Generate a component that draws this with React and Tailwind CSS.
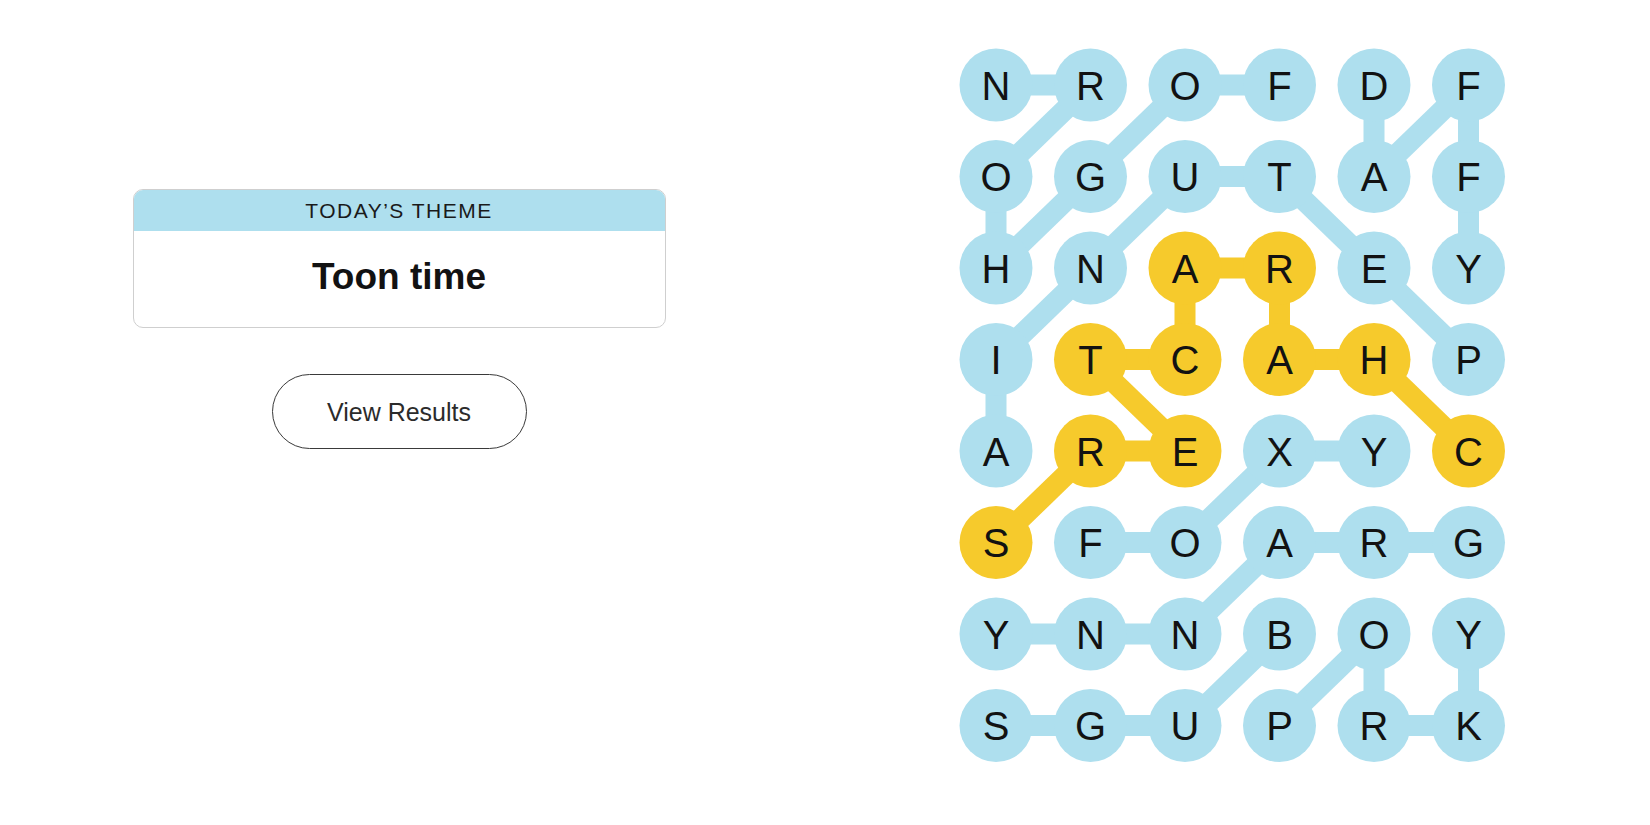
const rows = [
  "NROFDF",
  "OGUTAF",
  "HNAREY",
  "ITCAHP",
  "AREXYC",
  "SFOARG",
  "YNNBOY",
  "SGUPRK",
];

// paths of found words, as [row, col] cells
const blueWords = [
  [[0, 3], [0, 2], [1, 1], [2, 0], [1, 0], [0, 1], [0, 0]], // foghorn
  [[0, 4], [1, 4], [0, 5], [1, 5], [2, 5]], // daffy
  [[3, 5], [2, 4], [1, 3], [1, 2], [2, 1], [3, 0], [4, 0]], // petunia
  [[5, 1], [5, 2], [4, 3], [4, 4]], // foxy
  [[5, 5], [5, 4], [5, 3], [6, 2], [6, 1], [6, 0]], // granny
  [[6, 3], [7, 2], [7, 1], [7, 0]], // bugs
  [[7, 3], [6, 4], [7, 4], [7, 5], [6, 5]], // porky
];
const spangram = [[4, 5], [3, 4], [3, 3], [2, 3], [2, 2], [3, 2], [3, 1], [4, 2], [4, 1], [5, 0]];

const BLUE = "#aedfee";
const YELLOW = "#f6ca2c";

const cx = (c) => 46 + c * 94.5;
const cy = (r) => 45 + r * 91.5;

const key = (r, c) => `${r}-${c}`;
const yellowCells = new Set(spangram.map(([r, c]) => key(r, c)));

const Lines = ({ path, color }) =>
  path.slice(1).map(([r, c], i) => {
    const [pr, pc] = path[i];
    return (
      <line
        key={i}
        x1={cx(pc)}
        y1={cy(pr)}
        x2={cx(c)}
        y2={cy(r)}
        stroke={color}
        strokeWidth="21"
      />
    );
  });

const Board = () => (
  <svg width="570" height="740" className="block">
    {blueWords.map((w, i) => (
      <Lines key={i} path={w} color={BLUE} />
    ))}
    <Lines path={spangram} color={YELLOW} />
    {rows.map((row, r) =>
      row.split("").map((ch, c) => (
        <g key={key(r, c)}>
          <circle
            cx={cx(c)}
            cy={cy(r)}
            r="36.5"
            fill={yellowCells.has(key(r, c)) ? YELLOW : BLUE}
          />
          <text
            x={cx(c)}
            y={cy(r) + 14.5}
            textAnchor="middle"
            fontSize="40"
            fill="#121212"
            fontFamily="'Liberation Sans', Arial, sans-serif"
          >
            {ch}
          </text>
        </g>
      ))
    )}
  </svg>
);

export default function App() {
  return (
    <div className="w-full h-[825px] bg-white flex font-['Liberation_Sans',Arial,sans-serif] text-[#121212]">
      <div className="w-[798px] flex flex-col items-center pt-[189px]">
        <div className="w-[533px] rounded-[10px] border border-[#cfcfcf] overflow-hidden">
          <div className="h-[41px] bg-[#aedfee] flex items-center justify-center text-[21px] tracking-[1.5px] text-[#1a1a1a]">
            TODAY’S THEME
          </div>
          <div className="h-[96px] flex items-center justify-center pb-[4px] text-[37px] font-bold">
            Toon time
          </div>
        </div>
        <button className="mt-[46px] w-[255px] h-[75px] rounded-full border border-[#3a3a3a] text-[25px] text-[#2b2b2b] pt-[3px]">
          View Results
        </button>
      </div>
      <div className="ml-[152px] mt-[40px]">
        <Board />
      </div>
    </div>
  );
}
